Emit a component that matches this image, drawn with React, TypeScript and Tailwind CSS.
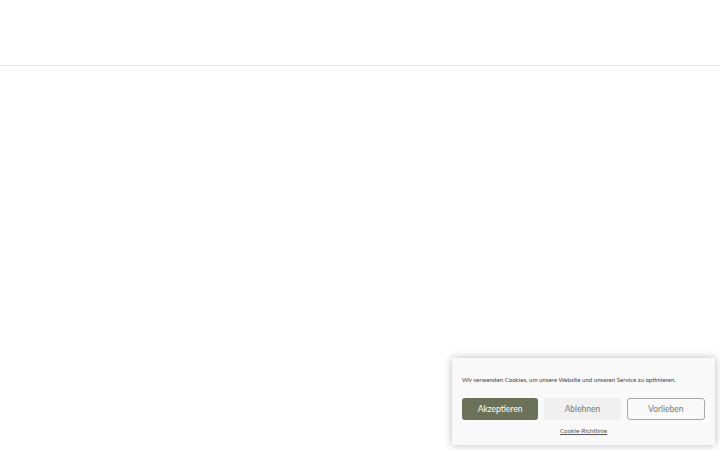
export default function App() {
  return (
    <div className="relative h-[450px] w-[720px] overflow-hidden bg-white font-['Lato',sans-serif]">
      <header className="h-[66px] border-b border-[#e6e6e6]" />

      {/* Cookie banner */}
      <div className="absolute bottom-[5px] right-[5px] w-[263px] bg-[#f9f9f9] px-[10px] pb-[9px] pt-[17px] shadow-[0_0_8px_rgba(0,0,0,0.28)]">
        <p className="whitespace-nowrap text-[6.1px] leading-[10px] text-[#444]">
          Wir verwenden Cookies, um unsere Website und unseren Service zu optimieren.
        </p>
        <div className="mt-[13px] flex gap-[6px]">
          <button className="h-[22px] flex-1 rounded-[3px] bg-[#6c7159] text-[8.5px] text-white">
            Akzeptieren
          </button>
          <button className="h-[22px] flex-1 rounded-[3px] bg-[#f0f0f0] text-[8.5px] text-[#777]">
            Ablehnen
          </button>
          <button className="h-[22px] flex-1 rounded-[3px] border border-[#a8a8a8] bg-[#f9f9f9] text-[8.5px] text-[#777]">
            Vorlieben
          </button>
        </div>
        <div className="mt-[6px] text-center text-[6.3px] leading-[10px]">
          <a className="text-[#555] underline">Cookie-Richtlinie</a>
        </div>
      </div>
    </div>
  );
}
